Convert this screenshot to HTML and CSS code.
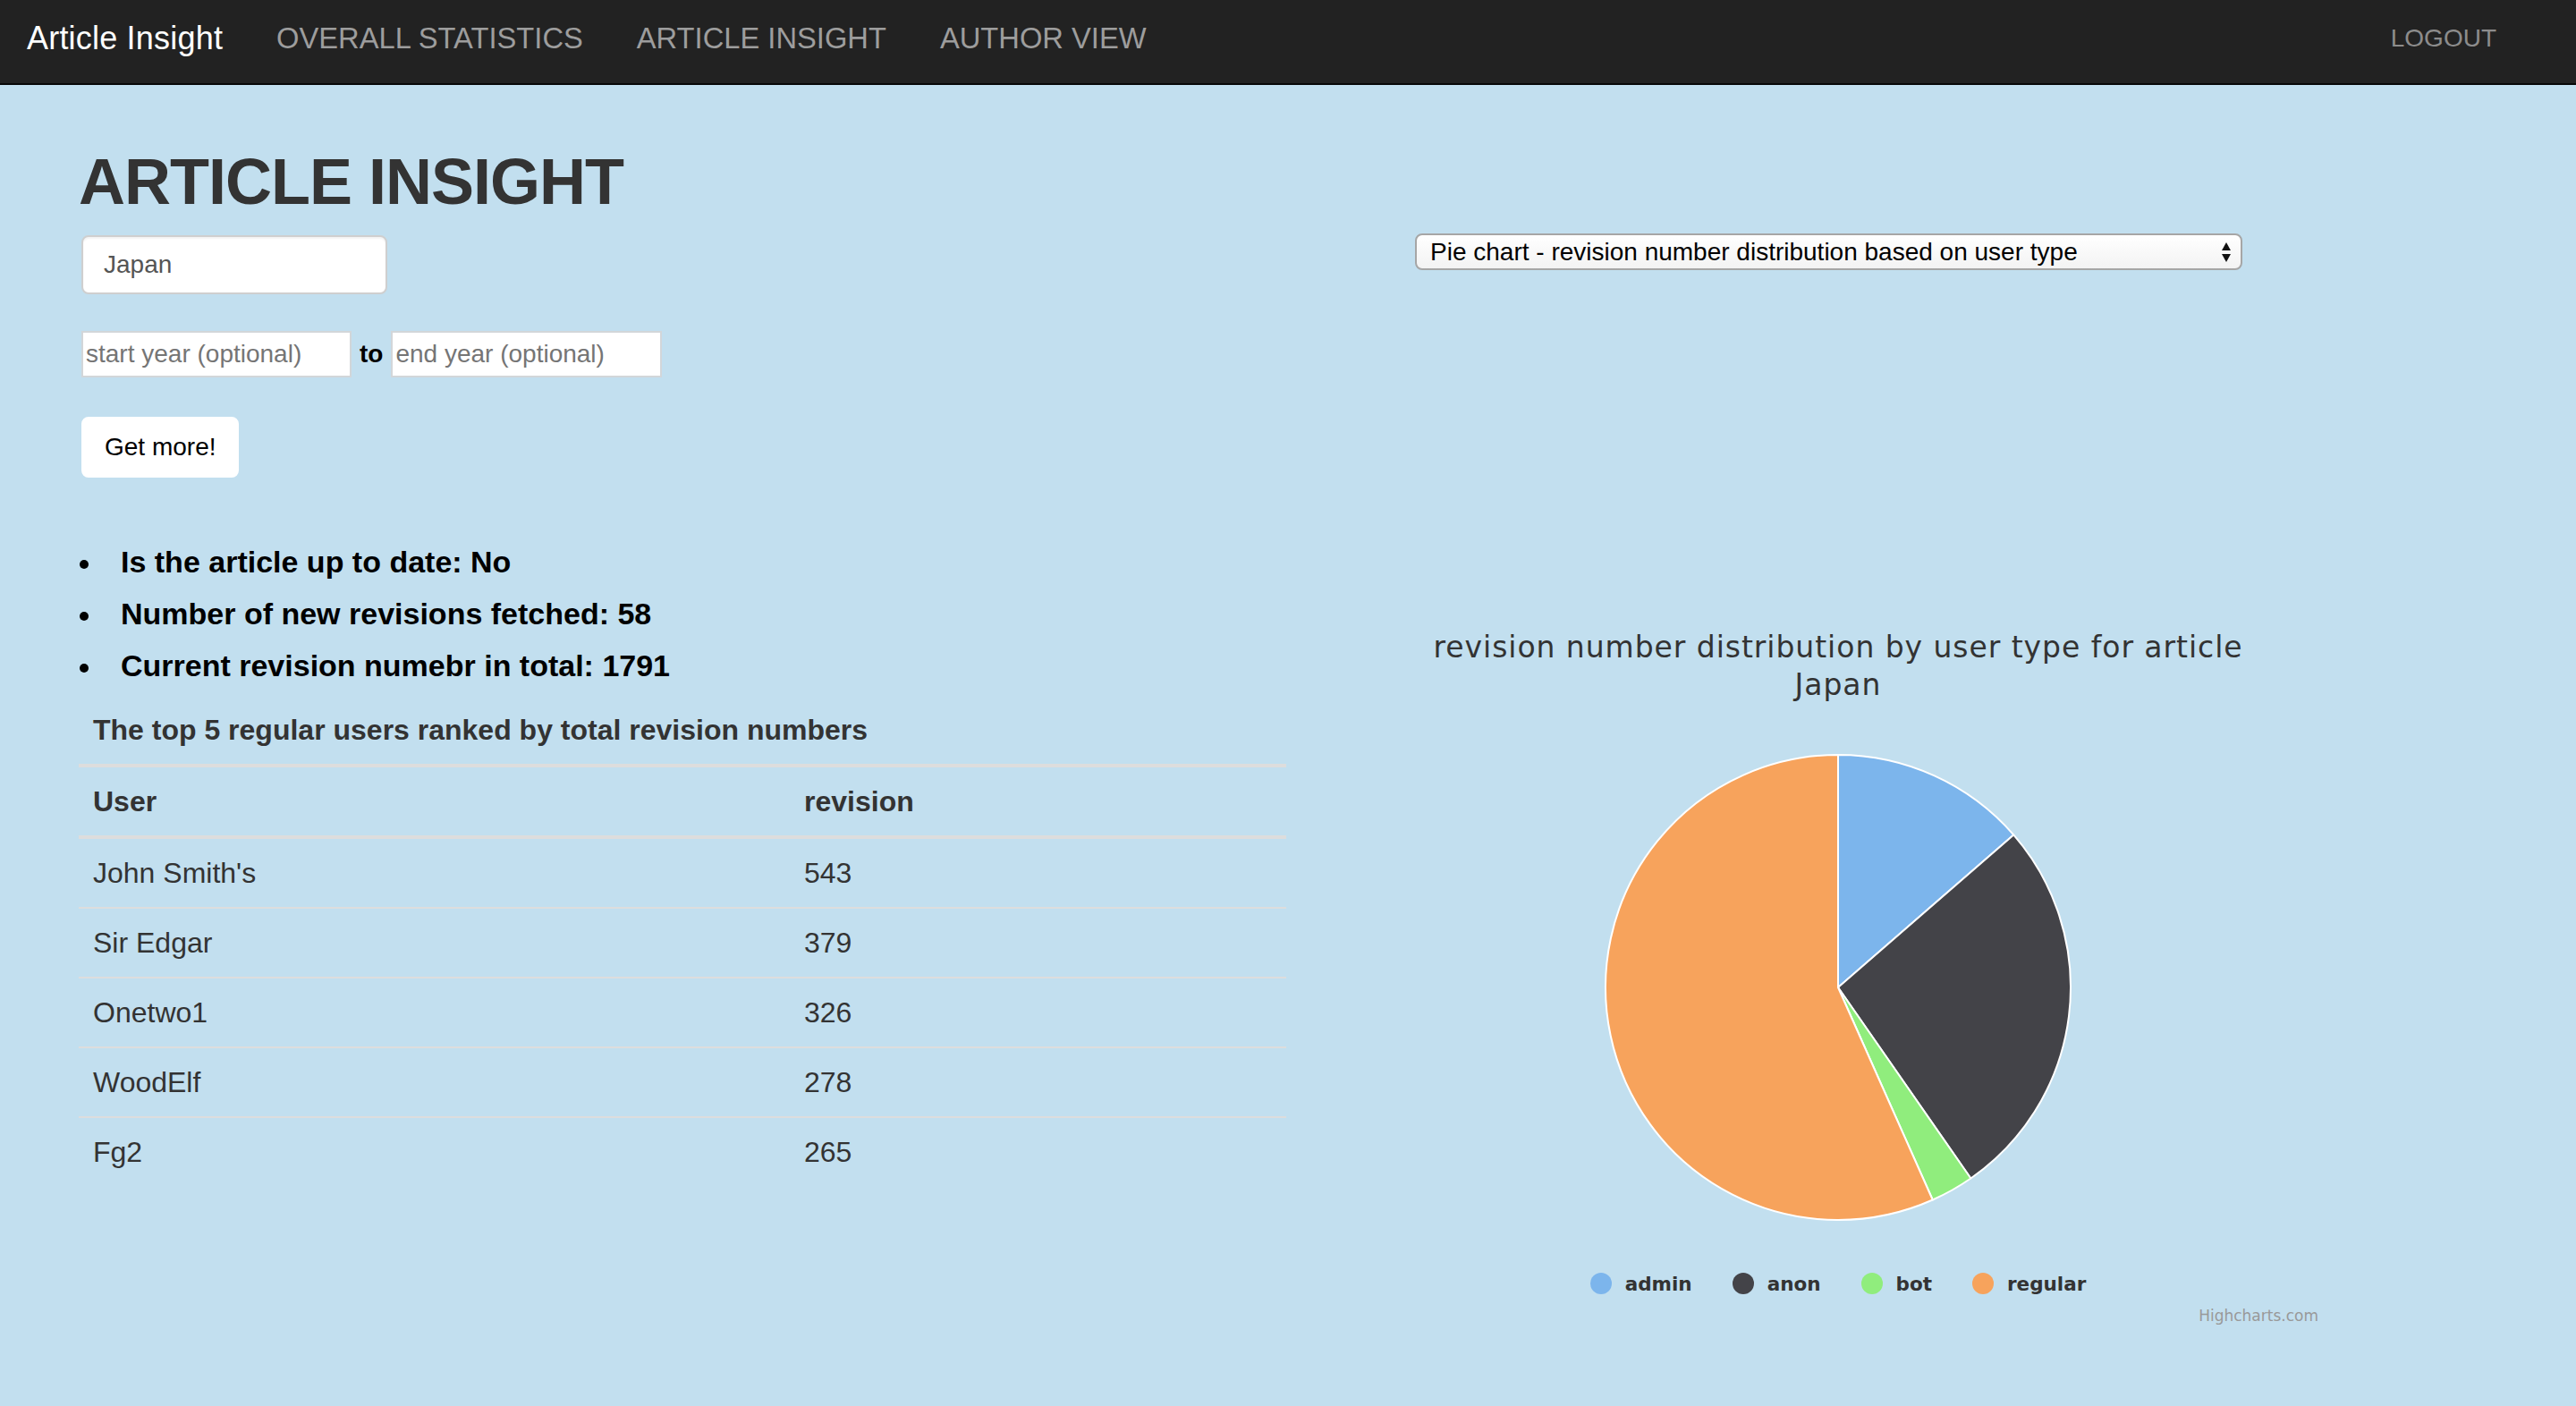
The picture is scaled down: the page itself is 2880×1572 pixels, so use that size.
FILE: index.html
```html
<!DOCTYPE html>
<html lang="en">
<head>
<meta charset="utf-8">
<title>Article Insight</title>
<link rel="stylesheet" href="styles.css">
</head>
<body>
<nav class="navbar">
  <a class="brand">Article Insight</a>
  <ul class="nav-links">
    <li><a>OVERALL STATISTICS</a></li>
    <li><a>ARTICLE INSIGHT</a></li>
    <li><a>AUTHOR VIEW</a></li>
  </ul>
  <a class="logout">LOGOUT</a>
</nav>
<main class="page">
  <section class="left">
    <h1 class="title">ARTICLE INSIGHT</h1>
    <input class="article-input" type="text" value="Japan">
    <div class="year-row">
      <input class="year-input" type="text" placeholder="start year (optional)">
      <span class="to">to</span>
      <input class="year-input year-end" type="text" placeholder="end year (optional)">
    </div>
    <button class="btn" type="button">Get more!</button>
    <ul class="facts">
      <li>Is the article up to date: No</li>
      <li>Number of new revisions fetched: 58</li>
      <li>Current revision numebr in total: 1791</li>
    </ul>
    <div class="caption">The top 5 regular users ranked by total revision numbers</div>
    <table class="users">
      <thead>
        <tr><th class="c-user">User</th><th>revision</th></tr>
      </thead>
      <tbody>
        <tr><td>John Smith's</td><td>543</td></tr>
        <tr><td>Sir Edgar</td><td>379</td></tr>
        <tr><td>Onetwo1</td><td>326</td></tr>
        <tr><td>WoodElf</td><td>278</td></tr>
        <tr><td>Fg2</td><td>265</td></tr>
      </tbody>
    </table>
  </section>
  <section class="right">
    <div class="select">
      <span class="select-text">Pie chart - revision number distribution based on user type</span>
      <svg class="select-arrows" width="12" height="24" viewBox="0 0 12 24">
        <path d="M6 1 L11 10 L1 10 Z" fill="#111"/>
        <path d="M6 23 L11 14 L1 14 Z" fill="#111"/>
      </svg>
    </div>
    <div class="chart">
      <div class="chart-title">
        <span class="line">revision number distribution by user type for article</span>
        <span class="line">Japan</span>
      </div>
      <svg class="pie" width="540" height="540" viewBox="0 0 540 540">
        <g stroke="#ffffff" stroke-width="2" stroke-linejoin="round">
          <path d="M270 270 L270 10 A260 260 0 0 1 466.22 99.42 Z" fill="#7cb5ec"/>
          <path d="M270 270 L466.22 99.42 A260 260 0 0 1 418.38 483.50 Z" fill="#434348"/>
          <path d="M270 270 L418.38 483.50 A260 260 0 0 1 375.75 507.52 Z" fill="#90ed7d"/>
          <path d="M270 270 L375.75 507.52 A260 260 0 1 1 270 10 Z" fill="#f7a35c"/>
        </g>
      </svg>
      <ul class="legend">
        <li><span class="dot dot-admin"></span>admin</li>
        <li><span class="dot dot-anon"></span>anon</li>
        <li><span class="dot dot-bot"></span>bot</li>
        <li><span class="dot dot-regular"></span>regular</li>
      </ul>
      <div class="credits">Highcharts.com</div>
    </div>
  </section>
</main>
</body>
</html>
```

FILE: styles.css
```css
* {
  box-sizing: border-box;
}

html,
body {
  margin: 0;
  padding: 0;
}

body {
  min-height: 100vh;
  background: #c2dfef;
  font-family: "Liberation Sans", Arial, Helvetica, sans-serif;
  font-size: 28px;
  color: #333;
}

/* ---------- navbar ---------- */
.navbar {
  display: flex;
  align-items: flex-start;
  height: 95px;
  padding: 23px 89px 0 30px;
  background: #222;
  border-bottom: 2px solid #080808;
}

.brand {
  font-size: 36px;
  line-height: 40px;
  letter-spacing: 0.2px;
  color: #fff;
  text-decoration: none;
}

.nav-links {
  display: flex;
  margin: 0 0 0 30px;
  padding: 0;
  list-style: none;
}

.nav-links a {
  display: block;
  padding: 0 30px;
  font-size: 32.7px;
  line-height: 40px;
  color: #9d9d9d;
}

.logout {
  margin-left: auto;
  font-size: 28px;
  line-height: 40px;
  color: #8c8c8c;
}

/* ---------- layout ---------- */
.page {
  display: flex;
  align-items: flex-start;
}

.left {
  width: 1350px;
  margin-left: 88px;
}

.right {
  width: 1114px;
  margin-left: 60px;
}

/* ---------- left column ---------- */
.title {
  margin: 68px 0 0;
  font-size: 72px;
  line-height: 80px;
  font-weight: bold;
  letter-spacing: -1px;
  color: #333;
}

.article-input {
  display: block;
  width: 342px;
  height: 66px;
  margin: 20px 0 0 3px;
  padding: 0 23px;
  border: 2px solid #cfcfcf;
  border-radius: 8px;
  background: #fff;
  font: 28px "Liberation Sans", Arial, sans-serif;
  color: #555;
  box-shadow: inset 0 2px 2px rgba(0, 0, 0, 0.05);
}

.year-row {
  display: flex;
  align-items: center;
  gap: 9px;
  margin: 41px 0 0 3px;
}

.year-input {
  width: 302px;
  height: 52px;
  padding: 0 3px;
  border: 2px solid #d2d6d9;
  border-radius: 0;
  background: #fff;
  font: 28px "Liberation Sans", Arial, sans-serif;
  color: #333;
}

.year-end {
  width: 303px;
}

.year-input::placeholder {
  color: #757575;
}

.to {
  font-weight: bold;
  color: #000;
}

.btn {
  display: block;
  width: 176px;
  height: 68px;
  margin: 44px 0 0 3px;
  padding: 0 0 0 24px;
  border: 2px solid #fff;
  border-radius: 8px;
  background: #fff;
  font: 28px "Liberation Sans", Arial, sans-serif;
  color: #000;
  text-align: left;
  white-space: nowrap;
}

.facts {
  margin: 65px 0 0;
  padding: 0;
  list-style: none;
}

.facts li {
  position: relative;
  padding-left: 47px;
  font-size: 34px;
  line-height: 58px;
  font-weight: bold;
  color: #000;
}

.facts li::before {
  content: "";
  position: absolute;
  left: 1px;
  top: 27px;
  width: 10px;
  height: 10px;
  border-radius: 50%;
  background: #000;
}

.caption {
  margin-top: 20px;
  padding: 0 16px;
  font-size: 32px;
  line-height: 46px;
  font-weight: bold;
  color: #333;
}

.users {
  width: 1350px;
  margin-top: 15px;
  border-spacing: 0;
  table-layout: fixed;
  font-size: 32px;
  color: #333;
}

.users th,
.users td {
  padding: 16px;
  line-height: 44px;
  text-align: left;
  vertical-align: top;
}

.users th {
  font-weight: bold;
  border-top: 4px solid #ddd;
  border-bottom: 4px solid #ddd;
}

.users .c-user {
  width: 795px;
}

.users td {
  border-bottom: 2px solid #ddd;
}

.users tbody tr:last-child td {
  border-bottom: 0;
}

/* ---------- right column ---------- */
.select {
  display: flex;
  align-items: center;
  justify-content: space-between;
  width: 925px;
  height: 41px;
  margin: 166px 0 0 84px;
  padding: 0 10px 0 15px;
  border: 2px solid #a6a6a6;
  border-radius: 8px;
  background: linear-gradient(#ffffff, #f3f3f3);
  color: #000;
  font-size: 28px;
  line-height: 37px;
}

.chart {
  display: flex;
  flex-direction: column;
  align-items: center;
}

.chart-title {
  display: flex;
  flex-direction: column;
  align-items: center;
  margin-top: 401px;
  font-family: "DejaVu Sans", sans-serif;
  font-size: 33px;
  line-height: 42px;
  letter-spacing: 0.95px;
  color: #333;
}

.pie {
  display: block;
  margin-top: 47px;
}

.legend {
  display: flex;
  align-items: center;
  gap: 45px;
  height: 30px;
  margin: 46px 0 0;
  padding: 0;
  list-style: none;
  font-family: "DejaVu Sans", sans-serif;
  font-size: 21.5px;
  font-weight: bold;
  color: #333;
}

.legend li {
  display: flex;
  align-items: center;
  gap: 15px;
}

.dot {
  width: 24px;
  height: 24px;
  border-radius: 50%;
}

.dot-admin { background: #7cb5ec; }
.dot-anon { background: #434348; }
.dot-bot { background: #90ed7d; }
.dot-regular { background: #f7a35c; }

.credits {
  align-self: stretch;
  margin-top: 11px;
  padding-right: 20px;
  font-family: "DejaVu Sans", sans-serif;
  font-size: 17px;
  line-height: 20px;
  color: #999;
  text-align: right;
}
```
